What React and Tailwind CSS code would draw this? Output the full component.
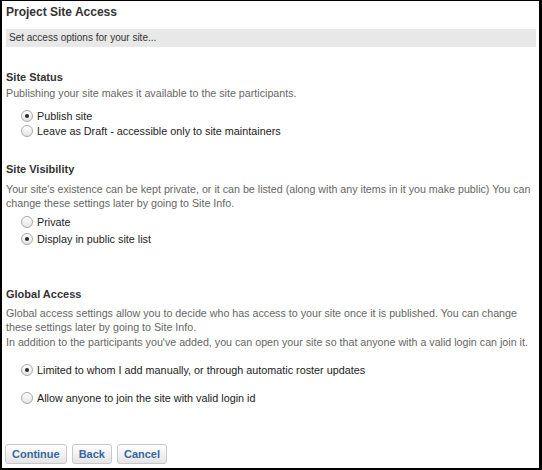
import React from "react";

function Radio({ checked, label, className = "" }) {
  return (
    <div className={"flex h-[14px] items-center gap-[4px] pl-[15px] " + className}>
      <span className="flex h-[12px] w-[12px] items-center justify-center rounded-full border border-[#a8a8a8] bg-gradient-to-b from-[#ffffff] to-[#e4e4e4]">
        {checked && <span className="h-[4px] w-[4px] rounded-full bg-[#2a2a2a]" />}
      </span>
      <span className="text-[10.8px] leading-[14px] text-[#222]">{label}</span>
    </div>
  );
}

function Btn({ children }) {
  return (
    <button className="h-[20px] rounded-[3px] border border-[#c8c8c8] bg-gradient-to-b from-[#ffffff] to-[#e4e4e4] px-[6px] text-[11px] font-bold leading-[18px] text-[#3568a0]">
      {children}
    </button>
  );
}

export default function App() {
  return (
    <div
      className="h-[470px] w-[542px] border-[2px] border-t-[1px] border-r-[3px] border-black bg-white"
      style={{ fontFamily: '"Liberation Sans", Arial, sans-serif' }}
    >
      <div className="pl-[4px] pr-[3px] pt-[3px]">
        <h1 className="text-[12px] font-bold leading-[16px] text-[#333]">Project Site Access</h1>
        <div className="mt-[9px] bg-[#e8e8e8] py-[2px] pl-[3px] text-[10px] leading-[14px] text-[#333]">
          Set access options for your site...
        </div>

        <h2 className="mt-[23px] text-[11px] font-bold leading-[14px] text-[#333]">Site Status</h2>
        <p className="mt-[2px] text-[10.7px] leading-[14px] text-[#666]">
          Publishing your site makes it available to the site participants.
        </p>
        <Radio checked label="Publish site" className="mt-[9px]" />
        <Radio label="Leave as Draft - accessible only to site maintainers" className="mt-[1px]" />

        <h2 className="mt-[24px] text-[11px] font-bold leading-[14px] text-[#333]">Site Visibility</h2>
        <p className="mt-[6px] text-[10.7px] leading-[14px] text-[#666]">
          Your site's existence can be kept private, or it can be listed (along with any items in it you make public) You can change these settings later by going to Site Info.
        </p>
        <Radio label="Private" className="mt-[5px]" />
        <Radio checked label="Display in public site list" className="mt-[3px]" />

        <h2 className="mt-[41px] text-[11px] font-bold leading-[14px] text-[#333]">Global Access</h2>
        <p className="mt-[5px] text-[10.7px] leading-[14px] text-[#666]">
          Global access settings allow you to decide who has access to your site once it is published. You can change these settings later by going to Site Info.
        </p>
        <p className="mt-[1px] text-[10.7px] leading-[14px] text-[#666]">
          In addition to the participants you've added, you can open your site so that anyone with a valid login can join it.
        </p>
        <Radio checked label="Limited to whom I add manually, or through automatic roster updates" className="mt-[14px]" />
        <Radio label="Allow anyone to join the site with valid login id" className="mt-[14px]" />

        <div className="-ml-[1px] mt-[39px] flex gap-[5px]">
          <Btn>Continue</Btn>
          <Btn>Back</Btn>
          <Btn>Cancel</Btn>
        </div>
      </div>
    </div>
  );
}
